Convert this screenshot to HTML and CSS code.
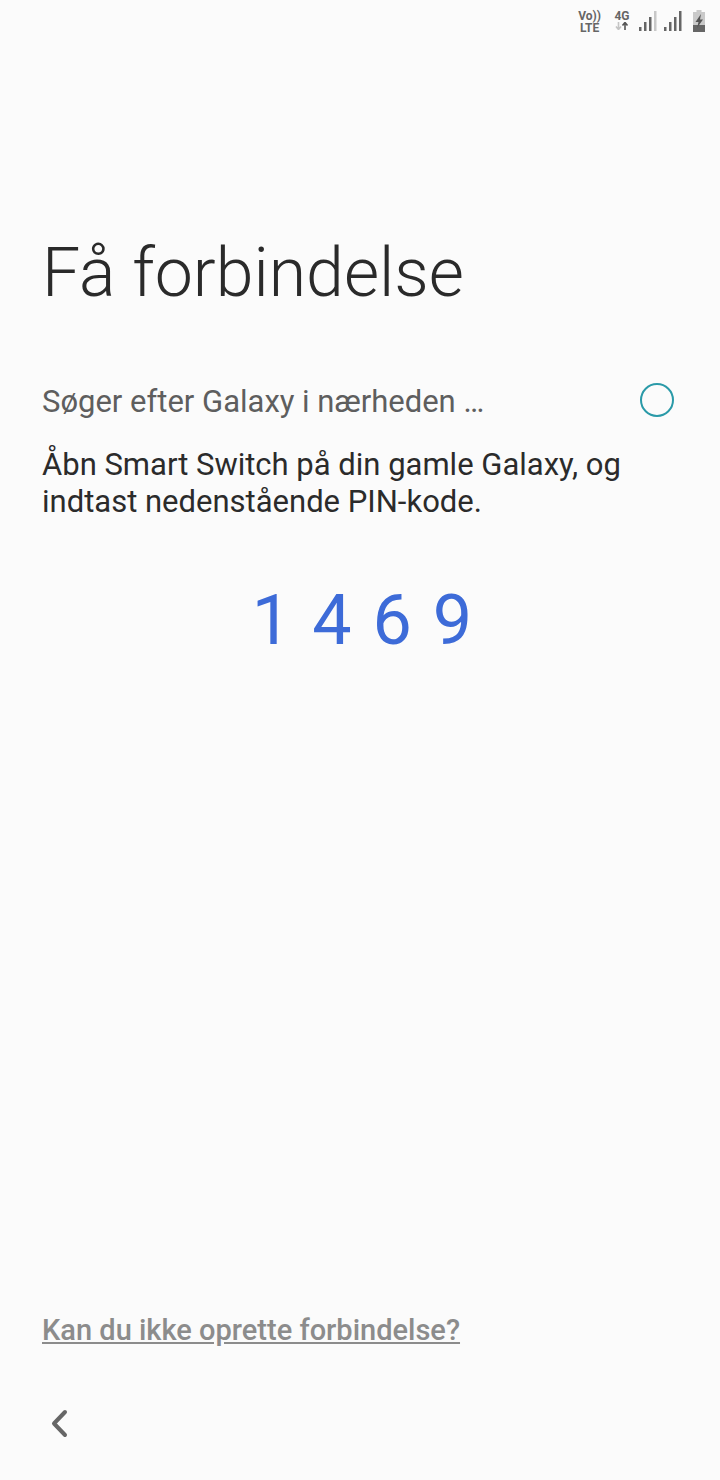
FILE: index.html
```html
<!DOCTYPE html>
<html lang="da">
<head>
    <meta charset="UTF-8">
    <meta name="viewport" content="width=device-width, initial-scale=1.0">
    <title>Få forbindelse</title>
    <link rel="stylesheet" href="styles.css">
</head>
<body>
    <div class="status">
        <div class="volte">Vo))<br>LTE</div>
        <div class="net">
            <div>4G</div>
            <svg width="16" height="8" viewBox="0 0 16 8">
                <path d="M4.500 0v7M2 4.500L4.500 7.500 7 4.500" fill="none" stroke="#c4c4c4" stroke-width="1.600"/>
                <path d="M11 8V1M8.500 3.500L11 .5l2.500 3" fill="none" stroke="#555" stroke-width="1.600"/>
            </svg>
        </div>
        <svg class="signal" width="19" height="21" viewBox="0 0 19 21">
            <rect x="0" y="16" width="2.500" height="4" fill="#666"/>
            <rect x="5" y="11" width="2.500" height="9" fill="#666"/>
            <rect x="10" y="6" width="2.500" height="14" fill="#666"/>
            <rect x="15" y="0" width="2.500" height="20" fill="#c8c8c8"/>
        </svg>
        <svg class="signal signal-last" width="19" height="21" viewBox="0 0 19 21">
            <rect x="0" y="16" width="2.500" height="4" fill="#666"/>
            <rect x="5" y="11" width="2.500" height="9" fill="#666"/>
            <rect x="10" y="6" width="2.500" height="14" fill="#666"/>
            <rect x="15" y="0" width="2.500" height="20" fill="#666"/>
        </svg>
        <svg class="battery" width="15" height="22" viewBox="0 0 15 22">
            <path d="M4.500 0h5v2h3.500v20H1V2h3.500z" fill="#c9c9c9"/>
            <rect x="1" y="15" width="12" height="7" fill="#666"/>
            <path d="M9 4L3.500 12h3L5 18l6-8.500H8z" fill="#555"/>
        </svg>
    </div>

    <div class="content">
        <h1 class="title">Få forbindelse</h1>
        <div class="search-row">
            <div class="search-text">Søger efter Galaxy i nærheden …</div>
            <div class="spinner"></div>
        </div>
        <p class="info">Åbn Smart Switch på din gamle Galaxy, og indtast nedenstående PIN-kode.</p>
        <div class="pin"><span>1</span><span>4</span><span>6</span><span>9</span></div>
    </div>

    <div class="bottom">
        <a class="help" href="#">Kan du ikke oprette forbindelse?</a>
        <button class="back" aria-label="Tilbage">
            <svg width="20" height="30" viewBox="0 0 20 30">
                <path d="M17 3L6 14.500 17 26" fill="none" stroke="#666" stroke-width="4" stroke-linecap="round" stroke-linejoin="round"/>
            </svg>
        </button>
    </div>
</body>
</html>
```

FILE: styles.css
```css
body {
    margin: 0;
    width: 720px;
    height: 1480px;
    background-color: #fbfbfb;
    font-family: Roboto, "Noto Sans", sans-serif;
    display: flex;
    flex-direction: column;
    overflow: hidden;
}
.status {
    height: 45px;
    padding: 8px 13px 0 0;
    box-sizing: border-box;
    display: flex;
    justify-content: flex-end;
    align-items: flex-start;
    color: #666;
}
.volte {
    font-size: 12px;
    line-height: 12px;
    font-weight: 700;
    text-align: center;
    margin-right: 13px;
    margin-top: 2px;
}
.net {
    font-size: 12px;
    line-height: 12px;
    font-weight: 700;
    text-align: center;
    margin-right: 9px;
    margin-top: 2px;
}
.net svg {
    display: block;
    margin: 0 auto;
}
.signal {
    margin-right: 6px;
    margin-top: 3px;
}
.signal-last {
    margin-right: 9px;
}
.battery {
    margin-top: 2px;
}
.content {
    flex: 1;
    padding: 0 46px 0 42px;
}
.title {
    margin: 183px 0 0;
    font-size: 68px;
    line-height: 90px;
    font-weight: 300;
    color: #2a2a2a;
}
.search-row {
    margin-top: 63px;
    display: flex;
    justify-content: space-between;
    align-items: center;
    height: 40px;
}
.search-text {
    font-size: 31px;
    color: #5e5e5e;
}
.spinner {
    width: 30px;
    height: 30px;
    margin-bottom: 2px;
    border: 2px solid #2a9aa8;
    border-radius: 50%;
}
.info {
    margin: 25px 0 0;
    font-size: 31px;
    line-height: 37px;
    color: #2b2b2b;
}
.pin {
    margin-top: 60px;
    padding-left: 8px;
    display: flex;
    justify-content: center;
    gap: 21px;
    font-size: 70px;
    line-height: 80px;
    font-weight: 400;
    color: #3d6bd8;
}
.bottom {
    padding: 0 0 41px 42px;
}
.help {
    font-size: 29px;
    font-weight: 500;
    color: #8c8c8c;
}
.back {
    display: block;
    margin-top: 62px;
    padding: 0 0 0 6px;
    border: none;
    background: none;
}
.back svg {
    display: block;
}
```
